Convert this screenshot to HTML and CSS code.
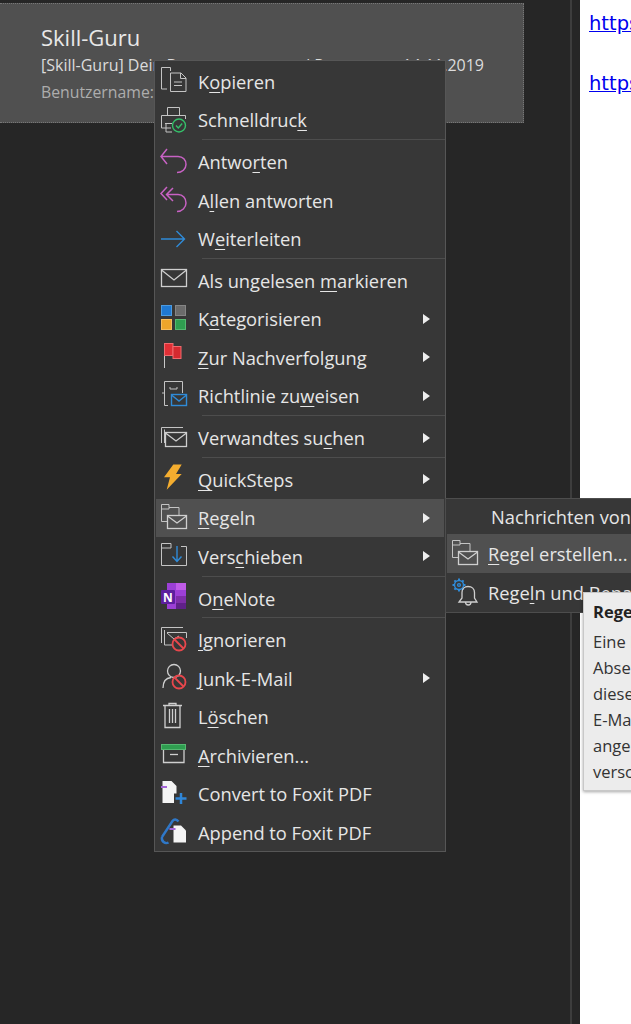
FILE: index.html
```html
<!DOCTYPE html>
<html lang="de">
<head>
<meta charset="utf-8">
<title>Outlook Kontextmenü</title>
<link rel="stylesheet" href="styles.css">
</head>
<body>
<div class="app">
  <main class="list">
    <section class="card">
      <h1 class="sender">Skill-Guru</h1>
      <div class="subject"><span>[Skill-Guru] Dein Benutzername und Passwort</span><span>14.11.2019</span></div>
      <div class="preview">Benutzername: Skill-Guru</div>
    </section>
  </main>
  <div class="gutter"></div>
  <article class="reading">
    <a class="link" href="#">https://skill-guru.example</a>
    <a class="link" href="#">https://skill-guru.example</a>
  </article>
</div>

<nav class="menu">
  <div class="row"><span class="ic"><svg viewBox="0 0 30 30"><g class="s"><path d="M11.5 1.5H2.500V23H8"/><path d="M11.5 1.5V5"/><path d="M11.5 7H22L27 12V25.500H11.500Z"/><path d="M21.500 7V12.500H27"/><path d="M15 16H23M15 19.500H23"/></g></svg></span><span class="t">K<u>o</u>pieren</span></div>
  <div class="row"><span class="ic"><svg viewBox="0 0 30 30"><g class="s"><path d="M8.500 10V2.500H20.500V10"/><path d="M12 23H2.500V10.500H26.500V14"/><path d="M6 18.500H13M7 18.500V27H13"/></g><circle cx="20" cy="20.500" r="6.500" class="gr"/><path d="M17 20.500L19.300 23L23.200 18.500" class="gr"/></svg></span><span class="t">Schnelldruc<u>k</u></span></div>
  <div class="sep"></div>
  <div class="row"><span class="ic"><svg viewBox="0 0 30 30"><path class="pu" d="M8 2L2 9.500L8 17M2.500 9.500H19C24 9.500 27 13 27 17.500C27 22 23 25.500 18 25.500"/></svg></span><span class="t">Antwo<u>r</u>ten</span></div>
  <div class="row"><span class="ic"><svg viewBox="0 0 30 30"><path class="pu" d="M8 2L2 8.500L8 15M14 3L7.500 9.500L14 16M8 9.500H19C24 9.500 27 13.500 27 18C27 22.500 23 26.500 18 26.500"/></svg></span><span class="t">A<u>l</u>len antworten</span></div>
  <div class="row"><span class="ic"><svg viewBox="0 0 30 30"><path class="bl" d="M2 15H25M17.500 7L25.500 15L17.500 23"/></svg></span><span class="t">W<u>e</u>iterleiten</span></div>
  <div class="sep"></div>
  <div class="row"><span class="ic"><svg viewBox="0 0 30 30"><g class="s2"><rect x="2.500" y="4.500" width="25" height="17"/><path d="M2.500 5L15 15L27.500 5"/></g></svg></span><span class="t">Als ungelesen <u>m</u>arkieren</span></div>
  <div class="row"><span class="ic"><svg viewBox="0 0 30 30"><rect x="2.500" y="1.500" width="10" height="10" fill="#1f78d1" stroke="#4c9be0"/><rect x="16.500" y="1.500" width="10" height="10" fill="#6b6b6b" stroke="#858585"/><rect x="2.500" y="15.500" width="10" height="10" fill="#eda52b" stroke="#f5bd60"/><rect x="16.500" y="15.500" width="10" height="10" fill="#2f9e50" stroke="#56b872"/></svg></span><span class="t">K<u>a</u>tegorisieren</span><i class="arr"></i></div>
  <div class="row"><span class="ic"><svg viewBox="0 0 30 30"><path d="M5.500 1V26" stroke="#c8c8c8" fill="none"/><rect x="5.500" y="1.500" width="8.500" height="12" fill="#e02f35" stroke="#f06a6e"/><rect x="14" y="4.500" width="8" height="12" fill="#d42a2f" stroke="#f06a6e"/></svg></span><span class="t"><u>Z</u>ur Nachverfolgung</span><i class="arr"></i></div>
  <div class="row"><span class="ic"><svg viewBox="0 0 30 30"><g class="s"><path d="M9 24.500H5.500V.5H23.500V12"/><path d="M5.500 12H3M11 6V8H18V6"/></g><rect x="12.500" y="13.500" width="15" height="11" class="bl"/><path d="M12.500 14L20 20L27.500 14" class="bl"/></svg></span><span class="t">Richtlinie zu<u>w</u>eisen</span><i class="arr"></i></div>
  <div class="sep"></div>
  <div class="row"><span class="ic"><svg viewBox="0 0 30 30"><g class="s"><path d="M24 4.500H2.500V20"/><path d="M5.500 6.500V20"/></g><g class="s2"><rect x="6.500" y="9.500" width="21" height="14"/><path d="M6.500 10L17 18L27.500 10"/></g></svg></span><span class="t">Verwandtes su<u>c</u>hen</span><i class="arr"></i></div>
  <div class="sep"></div>
  <div class="row"><span class="ic"><svg viewBox="0 0 30 30"><path d="M14.300 .5H22.700L17 10H22.700L7.700 25.700L11 13.300H5Z" fill="#f4ad2f"/></svg></span><span class="t"><u>Q</u>uickSteps</span><i class="arr"></i></div>
  <div class="row on"><span class="ic"><svg viewBox="0 0 30 30"><g class="s"><path d="M8 18.500H2.500V1.500H10V4.500H20V12"/><path d="M2.500 6H10V4.500"/></g><g class="s2"><rect x="8.500" y="12.500" width="19" height="13"/><path d="M8.500 13L18 20L27.500 13"/></g></svg></span><span class="t"><u>R</u>egeln</span><i class="arr"></i></div>
  <div class="row"><span class="ic"><svg viewBox="0 0 30 30"><g class="s"><path d="M12 2.500H2.500V24.500H27.500V5.500H22"/><path d="M2.500 7H12V2.500"/></g><path class="bl" d="M18 5V20M13.500 15.500L18 20.500L22.500 15.500"/></svg></span><span class="t">Vers<u>c</u>hieben</span><i class="arr"></i></div>
  <div class="sep"></div>
  <div class="row"><span class="ic"><svg viewBox="0 0 30 30"><rect x="8" y="0" width="19" height="26" fill="#9c3fd6"/><rect x="17" y="0" width="10" height="7" fill="#c05be8"/><rect x="17" y="13" width="10" height="7" fill="#7e2ea8"/><rect x="17" y="20" width="10" height="6" fill="#5f2188"/><rect x="2" y="7" width="14" height="14" rx="1" fill="#5c1f9e"/><text x="9" y="18.500" class="nn">N</text></svg></span><span class="t">O<u>n</u>eNote</span></div>
  <div class="sep"></div>
  <div class="row"><span class="ic"><svg viewBox="0 0 30 30"><g class="s"><path d="M24 2.500H2.500V18"/><path d="M5.500 5V20H13"/><path d="M8 7.500H27.500V13M8 8L15 14L20 11"/></g><circle cx="20" cy="19" r="6.500" class="rd"/><path d="M15.500 14.500L24.500 23.500" class="rd"/></svg></span><span class="t"><u>I</u>gnorieren</span></div>
  <div class="row"><span class="ic"><svg viewBox="0 0 30 30"><g class="s2"><circle cx="15" cy="8" r="6.500"/><path d="M4 25C4 19 7 15 12 14.500"/></g><circle cx="20" cy="19" r="6.500" class="rd"/><path d="M15.500 14.500L24.500 23.500" class="rd"/></svg></span><span class="t"><u>J</u>unk-E-Mail</span><i class="arr"></i></div>
  <div class="row"><span class="ic"><svg viewBox="0 0 30 30"><g class="s2"><path d="M4 3.500H23M10 3.500V1.500H17V3.500M6 3.500V25.500H21V3.500"/><path d="M10.500 7V21M13.500 7V21M16.500 7V21"/></g></svg></span><span class="t">L<u>ö</u>schen</span></div>
  <div class="row"><span class="ic"><svg viewBox="0 0 30 30"><rect x="2.500" y="4.500" width="24" height="5" fill="#2f9e50" stroke="#56b872"/><g class="s2"><path d="M4.500 10V22.500H25V10"/><path d="M11 14.500H19"/></g></svg></span><span class="t"><u>A</u>rchivieren...</span></div>
  <div class="row"><span class="ic"><svg viewBox="0 0 30 30"><path d="M3.500 2H12.500L17.500 7V14.500H15V24H3.500Z" fill="#f4f4f4"/><path d="M2 8H8" stroke="#a565d8" stroke-width="2"/><path d="M22 14V25M16.500 19.500H27.500" stroke="#2f86d8" stroke-width="2.500"/></svg></span><span class="t">Convert to Foxit PDF</span></div>
  <div class="row"><span class="ic"><svg viewBox="0 0 30 30"><path d="M3 20L13.500 4C15 2 17.500 2 19.500 4.500M3 20C2 24 6 27.500 9.500 25.500" fill="none" stroke="#2f78c8" stroke-width="2.400"/><path d="M14.500 8.500H22L27 13.500V25.500H14.500Z" fill="#f4f4f4"/><path d="M10.500 12H16.500" stroke="#a565d8" stroke-width="2"/></svg></span><span class="t">Append to Foxit PDF</span></div>
</nav>

<nav class="submenu">
  <div class="subrow first"><span class="icsub"></span><span class="t plain">Nachrichten von Skill-Guru immer verschieben</span></div>
  <div class="subrow on"><span class="icsub"><svg viewBox="0 0 30 30"><g class="s"><path d="M8 18.500H2.500V1.500H10V4.500H20V12"/><path d="M2.500 6H10V4.500"/></g><g class="s2"><rect x="8.500" y="12.500" width="19" height="13"/><path d="M8.500 13L18 20L27.500 13"/></g></svg></span><span class="t"><u>R</u>egel erstellen...</span></div>
  <div class="subrow"><span class="icsub"><svg viewBox="0 0 30 30"><circle cx="9" cy="7" r="4.500" class="bl"/><circle cx="9" cy="7" r="1.400" class="bl"/><path class="blt" d="M9 .5V2.500M9 11.500V13.500M2.500 7H4.500M13.500 7H15.500M4.400 2.400L5.800 3.800M12.200 10.200L13.600 11.600M13.600 2.400L12.200 3.800M5.800 10.200L4.400 11.600"/><g class="s2"><path d="M9 24H27L24.500 20V14.500C24.500 11 22 8.500 18 8.500C14.500 8.500 12 11 12 14.500V20Z"/><path d="M15.500 24C15.500 28 21 28 21 24"/></g></svg></span><span class="t">Rege<u>l</u>n und Benachrichtigungen verwalten...</span></div>
</nav>

<aside class="tip">
  <strong class="tip-title">Regel erstellen</strong>
  <p class="tip-body">Eine Regel für Nachrichten<br>Absender erstellen, um<br>diese immer in einen<br>E-Mail-Ordner zu<br>angeben und zu<br>verschieben</p>
</aside>
</body>
</html>
```
FILE: styles.css
```css
* { box-sizing: border-box; }
html, body { margin: 0; height: 1024px; overflow: hidden; }
body { background: #262626; font-family: "Open Sans", "Noto Sans", sans-serif; color: #e0e0e0; }

.app { display: flex; height: 1024px; }
.list { width: 572px; flex: none; border-right: 2px solid #3d3d3d; padding-top: 3px; }
.gutter { width: 8px; flex: none; background: #262626; }
.reading { flex: 1; min-width: 0; background: #fff; padding: 12px 0 0 9px; display: flex; flex-direction: column; gap: 37px; overflow: hidden; }
.link { font: 19.5px/23px "DejaVu Sans", Verdana, sans-serif; color: #0000ee; white-space: nowrap; }

.card { width: 524px; height: 120px; background: #505050; border: 1px dotted #777; border-left: 0; padding: 19px 0 0 41px; }
.sender { margin: 0; font-size: 22px; font-weight: 400; line-height: 28px; color: #e8e8e8; }
.subject { display: flex; justify-content: space-between; width: 443px; margin-top: 2px; font-size: 16px; line-height: 24px; color: #dcdcdc; }
.preview { margin-top: 3px; font-size: 15.8px; line-height: 24px; color: #adadad; }

.menu { position: absolute; left: 154px; top: 60px; width: 292px; height: 792px; background: #373737; border: 1px solid #565656; padding-top: 1px; }
.row { display: flex; align-items: center; height: 38.5px; margin: 0 1px; }
.row.on { background: #505050; }
.ic { width: 30px; height: 30px; margin-left: 3px; margin-right: 9px; flex: none; }
.ic svg, .icsub svg { display: block; width: 30px; height: 30px; fill: none; }
.t { font-size: 18.3px; color: #e6e6e6; white-space: nowrap; }
.t u { text-underline-offset: 3px; text-decoration-thickness: 1px; }
.arr { margin-left: auto; margin-right: 14px; width: 0; height: 0; border-left: 7px solid #eee; border-top: 5px solid transparent; border-bottom: 5px solid transparent; }
.sep { height: 3.25px; margin-left: 47px; }
.sep::after { content: ""; display: block; height: 1px; background: #4d4d4d; }

.s { stroke: #c4c4c4; fill: none; }
.s2 { stroke: #cfcfcf; fill: none; stroke-width: 1.3; }
.pu { stroke: #c862c4; stroke-width: 1.5; fill: none; }
.bl { stroke: #2f8bd8; stroke-width: 1.4; fill: none; }
.blt { stroke: #2f8bd8; stroke-width: 2; fill: none; }
.gr { stroke: #35c06a; stroke-width: 1.4; fill: none; }
.rd { stroke: #e8474c; stroke-width: 1.8; fill: none; }
.nn { fill: #fff; font: 700 12px "Open Sans", sans-serif; text-anchor: middle; }

.submenu { position: absolute; left: 445px; top: 498px; width: 240px; height: 115px; background: #373737; border: 1px solid #4d4d4d; overflow: hidden; }
.subrow { display: flex; align-items: center; height: 39px; margin: 0 1px; white-space: nowrap; }
.subrow.first { height: 35px; }
.subrow.on { background: #505050; }
.icsub { width: 30px; height: 30px; margin-left: 3px; margin-right: 8px; flex: none; }
.plain { margin-left: 3px; }

.tip { position: absolute; left: 583px; top: 592px; width: 220px; height: 199px; background: #ececec; border: 1px solid #c8c8c8; box-shadow: 0 1px 3px rgba(0,0,0,.35); padding: 7px 9px; color: #333; font-size: 16.5px; }
.tip-title { display: block; font-weight: 700; line-height: 24px; color: #222; }
.tip-body { margin: 5px 0 0; line-height: 26px; white-space: nowrap; }
```
